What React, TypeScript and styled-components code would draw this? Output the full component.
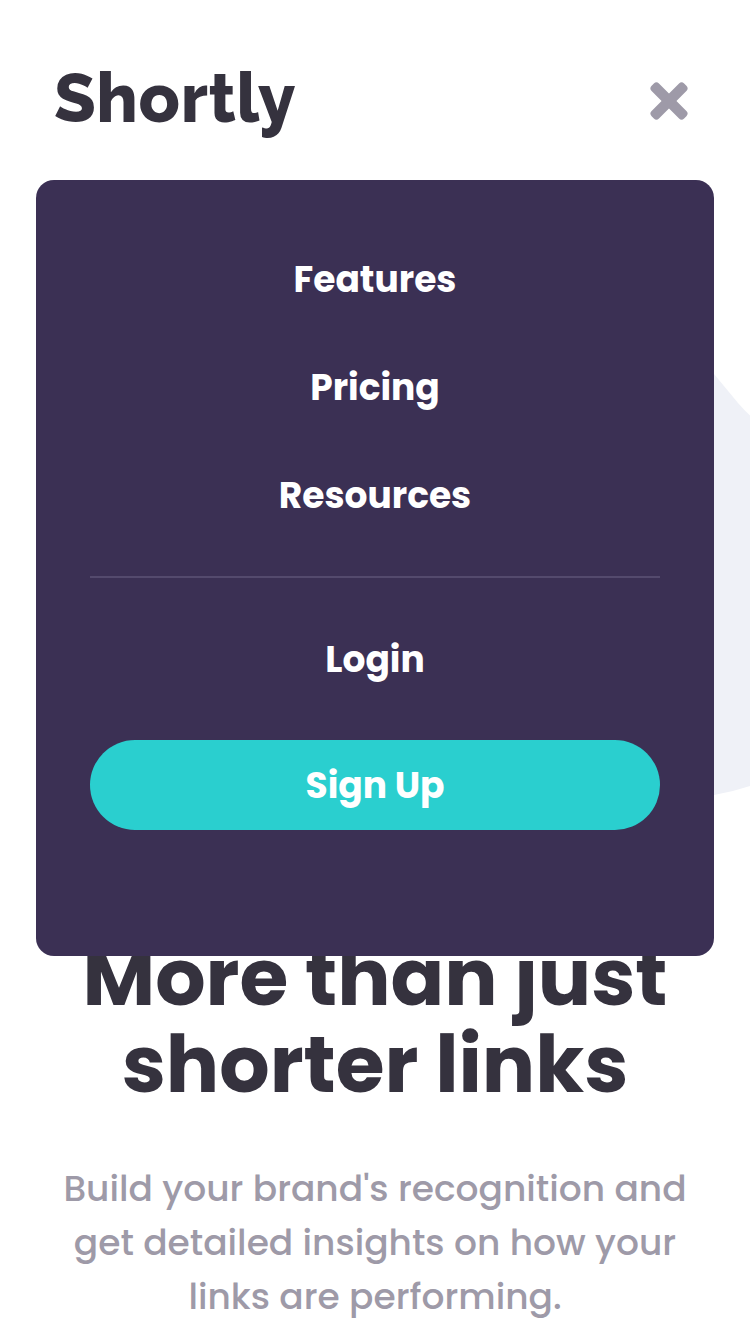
import React from "react";
import styled, { createGlobalStyle } from "styled-components";

const GlobalStyle = createGlobalStyle`
  * { box-sizing: border-box; }
  body {
    margin: 0;
    background: #fff;
    font-family: Poppins, Inter, "Open Sans", sans-serif;
    overflow: hidden;
  }
`;

const Page = styled.div`
  position: relative;
  width: 750px;
  height: 1334px;
  overflow: hidden;
  background: #fff;
`;

const Header = styled.header`
  display: flex;
  align-items: flex-start;
  justify-content: space-between;
  height: 180px;
  padding: 58px 62px 0 54px;
`;

const Logo = styled.a`
  color: #35323e;
  font-family: Raleway, Inter, sans-serif;
  font-size: 68px;
  font-weight: 800;
  line-height: 80px;
  letter-spacing: 0.68px;
`;

const CloseButton = styled.button`
  display: flex;
  margin-top: 24px;
  padding: 0;
  border: 0;
  background: none;
`;

const Illustration = styled.div`
  display: flex;
  justify-content: flex-end;
  height: 754px;
  padding-top: 180px;
`;

const Menu = styled.nav`
  position: absolute;
  top: 180px;
  left: 36px;
  width: 678px;
  height: 776px;
  padding: 73px 54px;
  border-radius: 18px;
  background: #3b3054;
`;

const MenuList = styled.div`
  display: flex;
  flex-direction: column;
  gap: 54px;
  padding-bottom: 53px;
  border-bottom: 2px solid #544a6d;
`;

const MenuLink = styled.a`
  display: block;
  color: #fff;
  font-size: 36px;
  font-weight: 700;
  line-height: 54px;
  text-align: center;
`;

const Account = styled.div`
  display: flex;
  flex-direction: column;
  gap: 53px;
  padding-top: 55px;
`;

const SignUp = styled(MenuLink)`
  height: 90px;
  border-radius: 45px;
  background: #2acfcf;
  line-height: 92px;
`;

const Title = styled.h1`
  margin: 0;
  color: #35323e;
  font-size: 79.2px;
  font-weight: 700;
  line-height: 87px;
  text-align: center;
`;

const Intro = styled.p`
  margin: 54px 0 0;
  color: #9e9aa8;
  font-size: 36px;
  font-weight: 500;
  line-height: 54px;
  text-align: center;
`;

const Line = styled.span`
  display: block;
  white-space: nowrap;
`;

export default function App() {
  return (
    <Page>
      <GlobalStyle />
      <Header>
        <Logo>Shortly</Logo>
        <CloseButton aria-label="Close menu">
          <svg width="38" height="38" viewBox="0 0 38 38">
            <g transform="translate(19 19)" fill="#9e9aa8">
              <rect x="-23" y="-5.2" width="46" height="10.4" rx="3.6" transform="rotate(45)" />
              <rect x="-23" y="-5.2" width="46" height="10.4" rx="3.6" transform="rotate(-45)" />
            </g>
          </svg>
        </CloseButton>
      </Header>
      <main>
        <Illustration>
          <svg width="50" height="460" viewBox="0 0 50 460">
            <path d="M0 -2L14 14L38 43Q44 50 50 55.5V426Q32 432 14 435L0 437Z" fill="#eff1f7" />
          </svg>
        </Illustration>
        <Title>
          <Line>More than just</Line>
          <Line>shorter links</Line>
        </Title>
        <Intro>
          <Line>Build your brand's recognition and</Line>
          <Line>get detailed insights on how your</Line>
          <Line>links are performing.</Line>
        </Intro>
      </main>
      <Menu>
        <MenuList>
          <MenuLink>Features</MenuLink>
          <MenuLink>Pricing</MenuLink>
          <MenuLink>Resources</MenuLink>
        </MenuList>
        <Account>
          <MenuLink>Login</MenuLink>
          <SignUp>Sign Up</SignUp>
        </Account>
      </Menu>
    </Page>
  );
}
